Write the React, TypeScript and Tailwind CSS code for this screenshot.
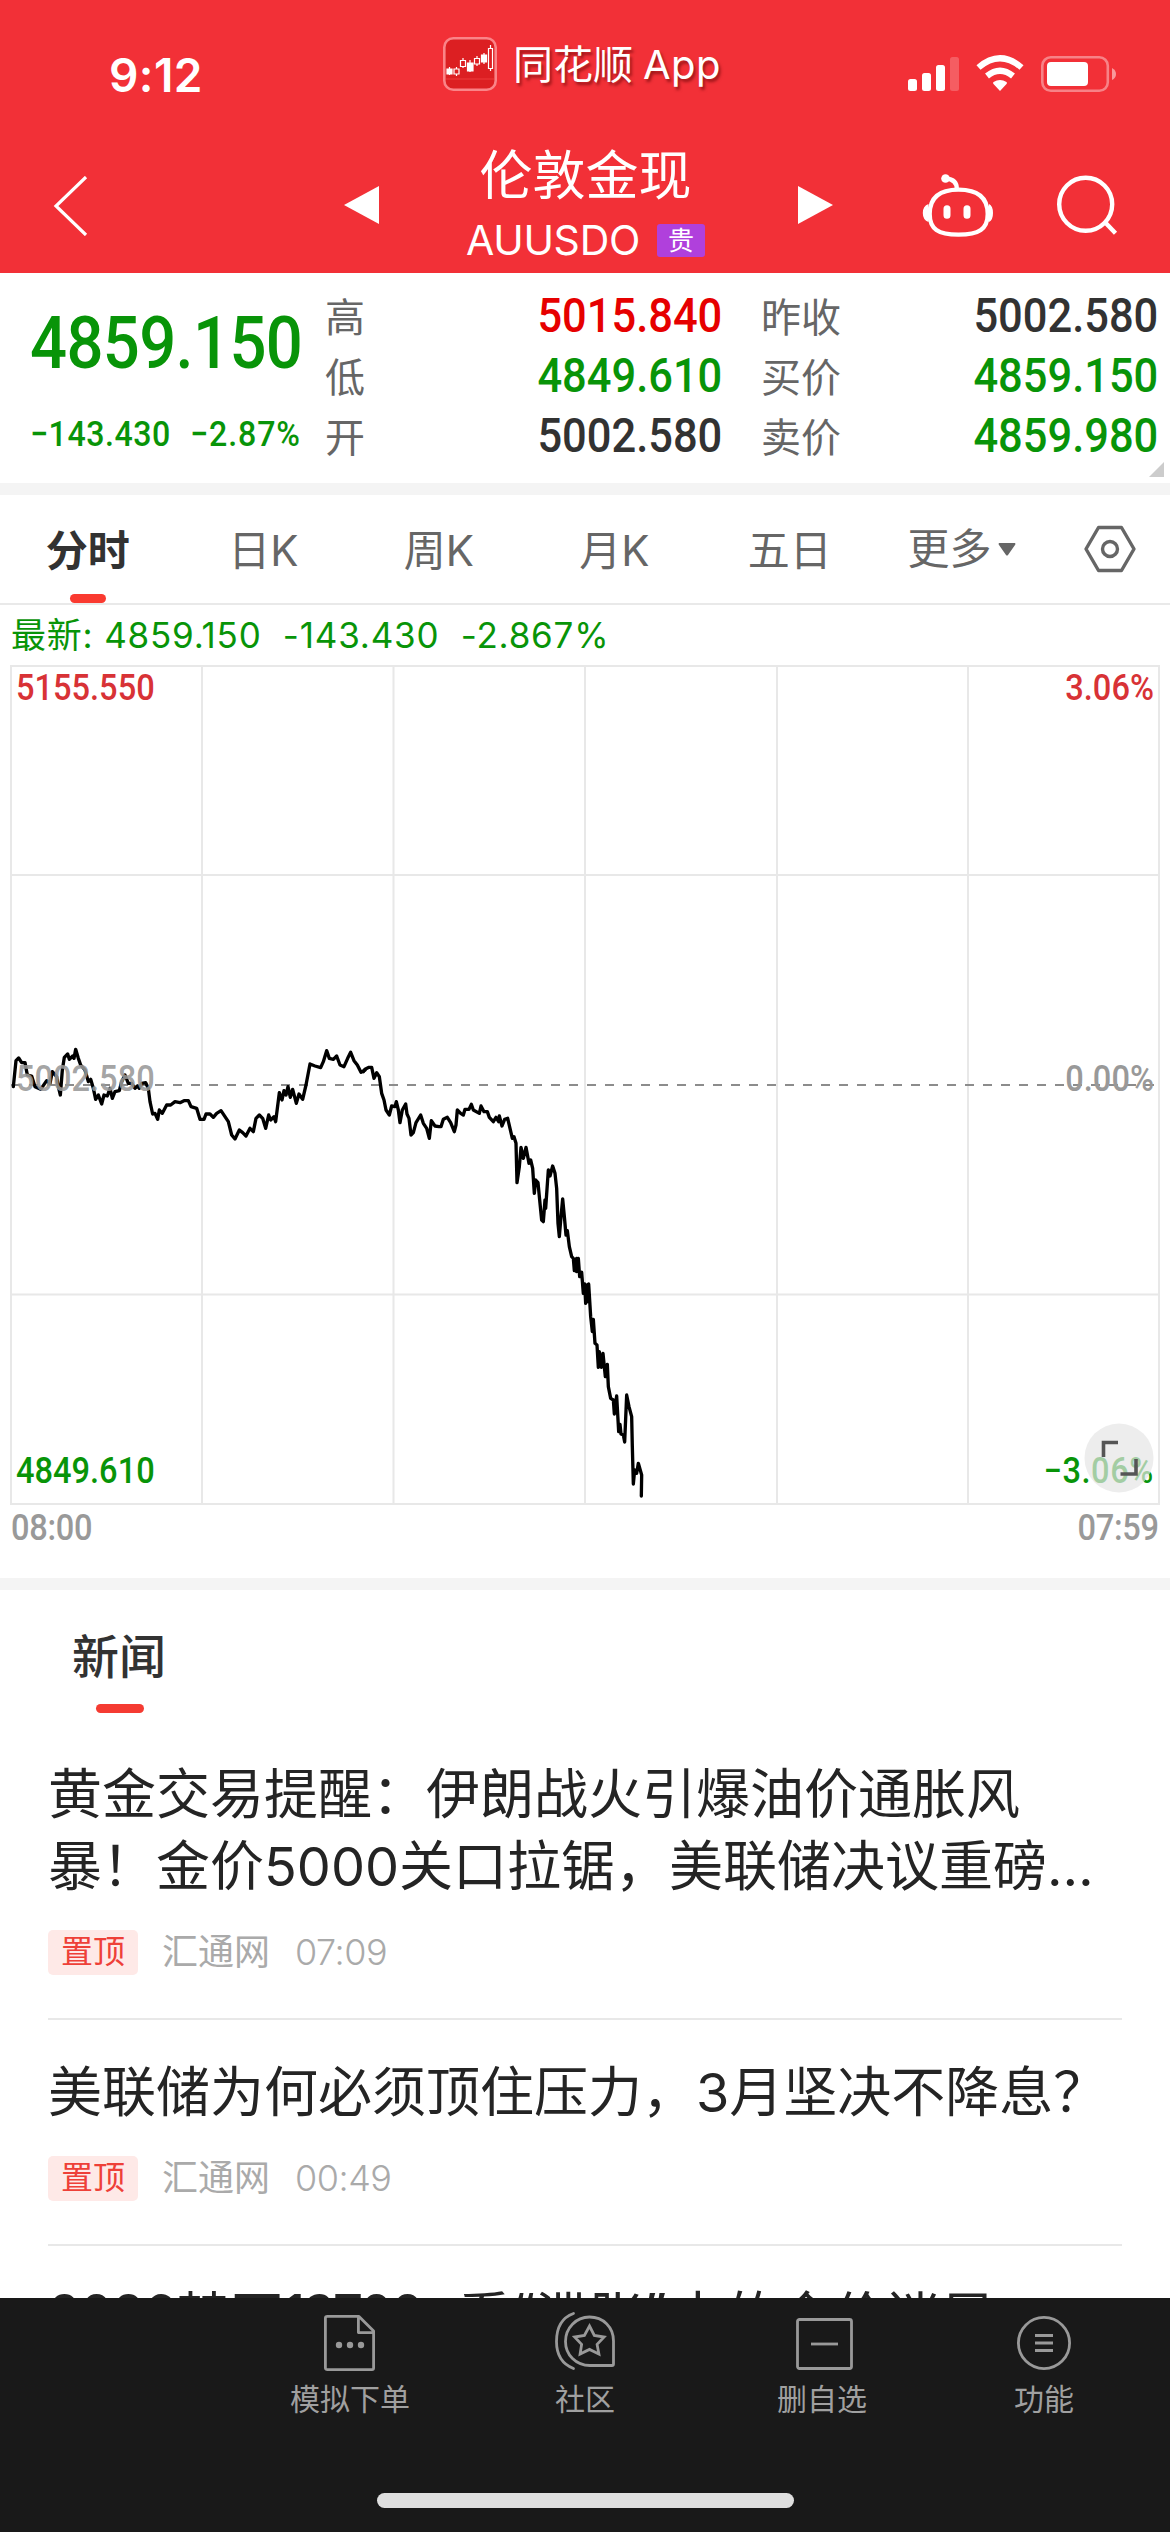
import type { ReactNode } from 'react';
import clsx from 'clsx';

const priceLine = {
  morning:
    '40,200 48,122 56,114 65,128 75,128 82,165 95,168 105,200 122,208 140,182 150,190 157,155 170,170 175,200 181,225 187,150 193,112 203,102 208,118 218,108 222,115 227,88 235,115 242,135 255,150 265,185 272,178 280,205 287,238 295,225 305,252 312,225 322,228 330,205 337,235 345,215 358,212 365,185 375,165 385,190 395,190 405,205 412,198 418,205 425,190 437,188 445,205 450,245 458,282 465,280 473,298 478,270 487,280 500,255 512,255 525,245 540,248 552,242 565,242 573,260 590,265 600,298 612,298 618,282 630,282 640,292 650,280 663,272 675,290 685,305 695,345 705,357 718,330 728,338 738,348 750,325 760,335 768,295 778,285 788,295 797,325 806,285 812,300 822,290 827,305 838,218 846,240 852,212 858,225 864,200 871,232 878,208 889,250 897,222 908,238 918,195 930,132 945,138 962,143 970,125 980,92 988,115 1000,118 1010,108 1020,135 1032,140 1043,115 1052,97 1062,122 1072,135 1083,157 1095,150',
  afternoon:
    '10,125 15,118 27,112 35,112 42,145 50,128 58,140 65,190 72,210 78,240 88,255 95,228 105,230 109,215 115,240 120,278 127,240 137,222 141,252 147,265 153,315 160,308 168,278 182,255 190,280 200,295 208,325 214,272 225,288 237,290 243,290 250,268 262,262 272,278 283,305 288,285 292,240 302,250 310,255 315,238 327,238 334,223 340,240 358,250 363,228 372,245 382,245 388,262 400,275 408,262 416,275 418,258 426,288 434,268 443,265 450,295 457,325 462,320 468,340 471,458 478,410 483,352 490,385 498,352 507,400 512,390 518,415 523,490 527,450 534,458 540,520 545,570 550,575 555,510 557,535 565,420 570,438 578,408 585,430 590,475 594,580 598,620 603,560 608,507 614,570 618,615 622,602 628,650 635,680 640,685 643,722 650,685 650,725 655,685 659,740 665,727 670,790 674,762 677,820 681,765 684,815 686,762 692,860 697,905 700,868 705,940 711,945 715,1012 718,965 724,1012 729,970 736,1040 742,1003 745,1070 752,1105 760,1110 763,1152 770,1098 776,1205 780,1183 783,1212 790,1215 794,1236 800,1095 807,1130 815,1160 817,1250 820,1362 824,1320 830,1330 835,1300 845,1335 844,1398',
};

const quotes = [
  { label: '高', value: '5015.840', color: 'text-[#e60000]' },
  { label: '低', value: '4849.610', color: 'text-[#089408]' },
  { label: '开', value: '5002.580', color: 'text-[#323232]' },
];

const prices = [
  { label: '昨收', value: '5002.580', color: 'text-[#323232]' },
  { label: '买价', value: '4859.150', color: 'text-[#089408]' },
  { label: '卖价', value: '4859.980', color: 'text-[#089408]' },
];

const tabs = ['分时', '日K', '周K', '月K', '五日'];

const news = [
  { lines: ['黄金交易提醒：伊朗战火引爆油价通胀风', '暴！金价5000关口拉锯，美联储决议重磅…'], source: '汇通网', time: '07:09' },
  { lines: ['美联储为何必须顶住压力，3月坚决不降息？'], source: '汇通网', time: '00:49' },
];

// Narrow digits used for every price
function Num({ children, right, className }: { children: ReactNode; right?: boolean; className?: string }) {
  return (
    <span
      className={clsx(
        'inline-block scale-x-[0.905] whitespace-pre font-[Roboto,sans-serif] font-medium leading-none',
        right ? 'origin-right' : 'origin-left',
        className,
      )}
    >
      {children}
    </span>
  );
}

function AppLogo() {
  return (
    <svg className="size-[54px]" viewBox="0 0 54 54" fill="none">
      <rect x="1.3" y="1.3" width="51.4" height="51.4" rx="9" fill="#dc1f22" stroke="#fa8488" strokeWidth="2.6" />
      <path d="M3 42h48" stroke="#ee3a3a" />
      <g stroke="#fff" strokeWidth="1.2">
        <path d="M6.500 30v8M13.500 30v9M20 21v10M27 23v12M34 19v10M41 16v11M47.500 8v26" />
        <path d="M4 32h5v5H4zM24.500 26h5.500v8h-5.500zM38.500 18h5v7h-5z" fill="#fff" />
        <path d="M11 32h5v5h-5zM17.500 23.500h5v6h-5zM31.500 21.500h5v5.500h-5zM45.500 11.500h4v20h-4z" fill="#dc1f22" />
      </g>
    </svg>
  );
}

function StatusIcons() {
  return (
    <svg className="h-10 w-[212px]" viewBox="905 53 212 40" fill="none">
      <g fill="#fff">
        <rect x="907" y="79" width="9" height="12" rx="2.5" />
        <rect x="921" y="73" width="9" height="18" rx="2.5" />
        <rect x="935" y="65" width="9" height="26" rx="2.5" />
        <rect x="949" y="57" width="9" height="34" rx="2.5" opacity=".22" />
        <path d="M999 91l-6.500-7q-1-1 0-2 6.500-4 13 0 1 1 0 2z" />
        <rect x="1046" y="62" width="41" height="24" rx="4" />
        <path d="M1111 68q4 2 4 6t-4 6z" opacity=".5" />
      </g>
      <path d="M977.500 67.500Q999 49 1020.500 67.500M986 76Q999 65.500 1012 76" stroke="#fff" strokeWidth="6.200" />
      <rect x="1041.300" y="57.300" width="65.500" height="33.500" rx="8.500" stroke="#fff" strokeWidth="2.600" opacity=".4" />
    </svg>
  );
}

function Header() {
  return (
    <header className="h-[273px] bg-[#f23037] text-white">
      <div className="flex h-[136px] items-start">
        <div className="w-[443px] pl-[109px] pt-[52px] font-[Inter,sans-serif] text-[46px] font-semibold leading-[46px] tracking-[0.4px]">9:12</div>
        <div className="flex w-[463px] items-center gap-[16px] pt-9">
          <AppLogo />
          <span className="pt-0.5 text-[40px] leading-[54px] [text-shadow:2px_3px_3px_rgba(90,0,0,.55)]">
            同花顺<span className="ml-2.5 tracking-[0.5px]">App</span>
          </span>
        </div>
        <div className="pt-[53px]">
          <StatusIcons />
        </div>
      </div>
      <div className="flex h-[137px]">
        <div className="w-[344px] pl-[52px] pt-10">
          <svg className="h-[60px] w-9" viewBox="0 0 36 60" fill="none" stroke="#fff" strokeWidth="3.200">
            <path d="M34 1L4 30l30 29" />
          </svg>
        </div>
        <svg className="mt-[50px] h-[38px] w-[35px]" viewBox="0 0 35 38" fill="#fff">
          <path d="M35 0v38L0 19z" />
        </svg>
        <div className="flex w-[419px] flex-col items-center pt-3 pr-1.5">
          <h1 className="text-[53px] leading-[56px]">伦敦金现</h1>
          <div className="mt-4 flex items-center gap-[17px]">
            <span className="text-[41px] leading-[40px] tracking-[-0.3px]">AUUSDO</span>
            <span className="h-[33px] w-12 rounded-[3px] bg-[#b040dc] text-center text-[26px] leading-[33px]">贵</span>
          </div>
        </div>
        <svg className="mt-[50px] h-[38px] w-[35px]" viewBox="0 0 35 38" fill="#fff">
          <path d="M0 0v38l35-19z" />
        </svg>
        <svg className="mt-[34px] ml-[87px] h-[70px] w-[75px]" viewBox="0 0 75 70" fill="none" stroke="#fff" strokeWidth="4.300">
          <path d="M38.500 19.700C59 19.700 67.700 29 67.700 44S59 64.700 38.500 64.700 9.700 59 9.700 44s8.300-24.300 28.800-24.300z" />
          <path d="M26 8.500Q37 9.500 36.800 19" />
          <circle cx="25.500" cy="8.500" r="4.300" fill="#fff" stroke="none" />
          <path d="M8.500 34Q2.800 36 2.800 43t5.700 9zM69 34q4 2 4 9t-4 9z" fill="#fff" stroke="none" />
          <path d="M27 38.700v6.600M47 38.700v6.600" strokeWidth="7" strokeLinecap="round" />
        </svg>
        <svg className="mt-[34px] ml-[56px] h-[70px] w-[70px]" viewBox="0 0 70 70" fill="none" stroke="#fff" strokeWidth="4.400">
          <circle cx="34.700" cy="34.300" r="26.500" />
          <path d="M54.500 52.800l10 10.500" />
        </svg>
      </div>
    </header>
  );
}

function QuoteColumn({ rows, className }: { rows: typeof quotes; className: string }) {
  return (
    <div className={className}>
      {rows.map((row) => (
        <div key={row.label} className="flex h-[60px] items-center justify-between">
          <span className="pt-1.5 text-[40px] leading-none text-[#666]">{row.label}</span>
          <Num right className={clsx('pt-0.5 text-[48px]', row.color)}>{row.value}</Num>
        </div>
      ))}
    </div>
  );
}

function QuotePanel() {
  return (
    <section className="relative flex h-[210px] bg-white pt-3">
      <div className="w-[325px] pl-[30px] text-[#089408]">
        <Num className="mt-[23px] block text-[72px] tracking-[-0.7px]">4859.150</Num>
        <div className="mt-[37px] flex text-[35.5px] leading-none">
          <Num className="w-[160px] tracking-[0.6px]">−143.430</Num>
          <Num className="tracking-[1px]">−2.87%</Num>
        </div>
      </div>
      <QuoteColumn rows={quotes} className="w-[397px]" />
      <QuoteColumn rows={prices} className="ml-[39px] w-[397px]" />
      <svg className="absolute right-1.5 bottom-1.5 size-[15px]" viewBox="0 0 15 15" fill="#ccc">
        <path d="M15 0v15H0z" />
      </svg>
    </section>
  );
}

function Tabs() {
  return (
    <nav className="flex h-[110px] border-b-2 border-[#e9e9e9] bg-white text-[42px] text-[#666]">
      {tabs.map((tab, i) => (
        <div key={tab} className="flex w-[175.5px] flex-col items-center pt-7">
          <span className={clsx('leading-[56px]', i === 0 && 'font-bold text-[#323232]')}>{tab}</span>
          {i === 0 && <span className="mt-[15px] h-[9px] w-9 rounded-full bg-[#fa3a30]" />}
        </div>
      ))}
      <div className="flex w-[206px] items-center gap-1.5 pl-[30px] leading-[56px]">
        更多
        <svg className="h-[13px] w-[18px]" viewBox="0 0 18 13" fill="#666">
          <path d="M1 0h16q1 1 0 2l-7 10q-1 1-2 0L1 2q-1-1 0-2z" />
        </svg>
      </div>
      <svg className="mt-[30px] h-[48px] w-[52px]" viewBox="0 0 52 48" fill="none" stroke="#666" strokeWidth="3.400">
        <path d="M14.500 2.500h23L50 24 37.500 45.500h-23L2 24z" strokeLinejoin="round" />
        <circle cx="26" cy="24" r="7.500" />
      </svg>
    </nav>
  );
}

function Chart() {
  return (
    <section className="h-[973px] bg-white">
      <div className="h-[60px] whitespace-pre pl-[11px] font-[Inter,'Noto_Sans_CJK_SC',sans-serif] text-[35px] leading-[60px] tracking-[0.8px] text-[#089408]">
        最新: 4859.150  -143.430  -2.867%
      </div>
      <div className="relative h-[840px] text-[36px]">
        <svg className="block h-[840px] w-full" viewBox="0 665 1170 840" fill="none">
          <g stroke="#e8e8e8" strokeWidth="2">
            <path d="M11 666h1148v838H11zM202 666v838M393.500 666v838M585 666v838M777 666v838M968 666v838M11 875h1148M11 1294.500h1148" />
          </g>
          <path d="M11 1085h1148" stroke="#8c8c8c" strokeWidth="2" strokeDasharray="9 9" />
          <g stroke="#000" strokeWidth="10" strokeLinejoin="round" strokeLinecap="round">
            <polyline points={priceLine.morning} transform="translate(0 1020) scale(.33333)" />
            <polyline points={priceLine.afternoon} transform="translate(360 1030) scale(.33333)" />
          </g>
        </svg>
        <Num className="absolute left-4 top-[5px] text-[#d83236]">5155.550</Num>
        <Num right className="absolute right-4 top-[5px] text-[#d83236]">3.06%</Num>
        <Num className="absolute left-4 top-[396px] text-[#999]/90">5002.580</Num>
        <Num right className="absolute right-4 top-[396px] text-[#999]">0.00%</Num>
        <Num className="absolute bottom-4 left-4 text-[#089408]">4849.610</Num>
        <Num right className="absolute right-4 bottom-4 tracking-[0.6px] text-[#089408]">−3.06%</Num>
        <svg className="absolute right-4 bottom-[12px] size-[70px]" viewBox="0 0 70 70" fill="none">
          <circle cx="35" cy="35" r="34.500" fill="#e6e6e6" opacity=".7" />
          <path d="M19.500 34V19.500H34M36.500 51H52V36" stroke="#555" strokeWidth="3.600" />
        </svg>
      </div>
      <div className="flex justify-between pr-[11px] pl-[11px] pt-[5px] text-[36px] text-[#999]">
        <Num className="tracking-[-0.3px]">08:00</Num>
        <Num right className="tracking-[-0.3px]">07:59</Num>
      </div>
    </section>
  );
}

function News() {
  return (
    <section className="h-[708px] overflow-hidden bg-white">
      <div className="h-[132px] pl-[72px] pt-[37px]">
        <h2 className="text-[47px] font-medium leading-[60px] text-[#323232]">新闻</h2>
        <div className="mt-[17px] ml-6 h-[9px] w-12 rounded-full bg-[#f53b32]" />
      </div>
      {news.map((item) => (
        <article key={item.time} className="mx-12 border-b-2 border-[#e8e8e8] pt-[37px] pb-[43px]">
          <h3 className="text-[54px] leading-[72px] text-[#242424]">
            {item.lines.map((line) => (
              <span key={line} className="block whitespace-nowrap">{line}</span>
            ))}
          </h3>
          <div className="mt-[27px] flex h-[45px] items-center text-[36px] leading-[45px] text-[#aaa]">
            <span className="h-[45px] w-[90px] rounded-[5px] bg-[#fee9e7] text-center text-[32px] leading-[43px] text-[#ee4038]">置顶</span>
            <span className="ml-6">{item.source}</span>
            <span className="ml-[25px] font-light tracking-[-0.5px]">{item.time}</span>
          </div>
        </article>
      ))}
      <h3 className="mx-12 flex pt-9 text-[54px] leading-[72px] whitespace-nowrap text-[#242424]">
        <span className="-mt-1 tracking-[-1.5px]">2026</span>
        禁区
        <span className="-mt-1 w-[174px] tracking-[-3px]">13700</span>
        看<span className="-mt-[5px]">“</span>滞胀<span className="-mt-[5px] mr-1">”</span>中的金价迷局
      </h3>
    </section>
  );
}

function NavItem({ label, className, children }: { label: string; className: string; children: ReactNode }) {
  return (
    <div className={clsx('flex flex-col items-center', className)}>
      <svg className="h-[62px] w-16" viewBox="0 0 64 62" fill="none" stroke="#999" strokeWidth="2.800">
        {children}
      </svg>
      <span className="mt-2 text-[30px] leading-[36px]">{label}</span>
    </div>
  );
}

function BottomNav() {
  return (
    <footer className="h-[234px] bg-[#191919] text-[#a0a0a0]">
      <div className="flex h-[195px] pl-[232px] pt-[13px]">
        <NavItem label="模拟下单" className="w-[236px]">
          <path d="M9.400 5.400H41L55.600 20v37q0 1.600-1.600 1.600H9.400q-2 0-2-1.600V7q0-1.600 2-1.600zM40.400 6v15.600H55" strokeLinejoin="round" />
          <g fill="#999" stroke="none">
            <circle cx="21" cy="34" r="3.200" />
            <circle cx="32" cy="34" r="3.200" />
            <circle cx="43" cy="34" r="3.200" />
          </g>
        </NavItem>
        <NavItem label="社区" className="w-[234px]">
          <path d="M60.500 30C60.500 16 50 6 36.500 6S12.500 17 12.500 30.500 23 54.500 37 54.500h22q1.500 0 1.500-1.500z" />
          <path d="M20.500 2.500C8 7 3.500 18 3.500 30.500S9 53 20.500 57.500" strokeLinecap="round" />
          <path d="M36.500 15l4.800 9.400 9.800 1.600-7 7.400 1.800 9.600-9.400-4.600-9.400 4.600 1.500-9.600-7-7.400 9.800-1.600z" />
        </NavItem>
        <NavItem label="删自选" className="w-[240px]">
          <rect x="7.500" y="8.500" width="54" height="49" rx="2" />
          <path d="M21 33h27" />
        </NavItem>
        <NavItem label="功能" className="w-[204px]">
          <circle cx="32" cy="32" r="25.600" />
          <path d="M23 24.500h18M23 32h18M23 39.500h18" />
        </NavItem>
      </div>
      <div className="mx-auto h-[15px] w-[417px] rounded-full bg-[#dfdfdf]" />
    </footer>
  );
}

export default function App() {
  return (
    <div className="h-[2532px] w-[1170px] overflow-hidden bg-[#f4f4f4] font-[Inter,'Noto_Sans_CJK_SC',sans-serif]">
      <Header />
      <QuotePanel />
      <div className="h-3" />
      <Tabs />
      <Chart />
      <div className="h-3" />
      <News />
      <BottomNav />
    </div>
  );
}
